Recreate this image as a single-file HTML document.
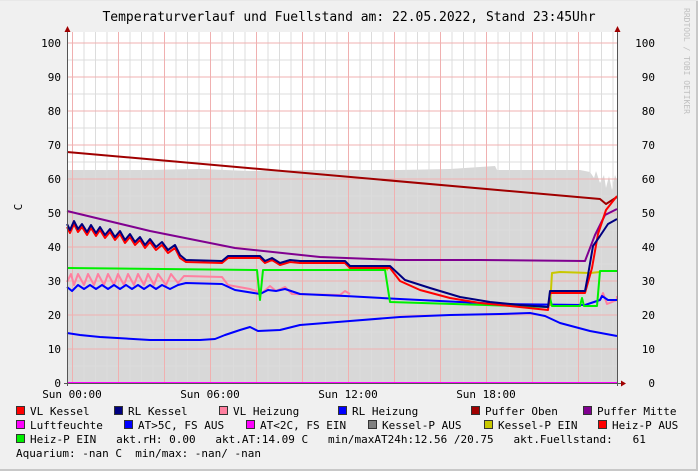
<!DOCTYPE html>
<html><head><meta charset="utf-8"><style>
html,body{margin:0;padding:0;background:#f0f0f0;}
svg{display:block;font-family:"DejaVu Sans Mono","Liberation Mono",monospace;}
</style></head><body>
<svg width="698" height="471" viewBox="0 0 698 471" xmlns="http://www.w3.org/2000/svg">
<rect x="0" y="0" width="698" height="471" fill="#f0f0f0"/>
<rect x="696" y="0" width="2" height="471" fill="#c8c8c8"/>
<rect x="0" y="469" width="698" height="2" fill="#c8c8c8"/>
<rect x="0" y="0" width="698" height="1" fill="#e8e8e8"/>
<rect x="67" y="32" width="550" height="351" fill="#ffffff"/>
<path d="M67,383 L67,170 L150,170 L200,169 L250,171 L300,170 L350,170 L400,170 L450,169 L495,166 L497,170 L540,170 L580,170 L590,172 L594,178 L596,171 L600,183 L604,175 L606,188 L609,176 L612,190 L615,175 L617,180 L617,383 Z" fill="#d8d8d8"/>
<g stroke-width="1">
<g stroke="#dcdcdc">
<path d="M84,32V383M95.5,32V383M107,32V383M130,32V383M141.5,32V383M153,32V383M176,32V383M187.5,32V383M199,32V383M222,32V383M233.5,32V383M245,32V383M268,32V383M279.5,32V383M291,32V383M314,32V383M325.5,32V383M337,32V383M360,32V383M371.5,32V383M383,32V383M406,32V383M417.5,32V383M429,32V383M452,32V383M463.5,32V383M475,32V383M498,32V383M509.5,32V383M521,32V383M544,32V383M555.5,32V383M567,32V383M590,32V383M601.5,32V383M613,32V383"/>
<path d="M67,366H617M67,332H617M67,298H617M67,264H617M67,230H617M67,196H617M67,162H617M67,128H617M67,94H617M67,60H617"/>
</g>
<g stroke="#f0b0b0">
<path d="M72.5,32V383M118.5,32V383M164.5,32V383M210.5,32V383M256.5,32V383M302.5,32V383M348.5,32V383M394.5,32V383M440.5,32V383M486.5,32V383M532.5,32V383M578.5,32V383"/>
<path d="M67,349H617M67,315H617M67,281H617M67,247H617M67,213H617M67,179H617M67,145H617M67,111H617M67,77H617M67,43H617"/>
</g>
</g>
<g fill="none" stroke-width="2" stroke-linejoin="round">
<path d="M67,152 L600,199 L606,204 L617,197" stroke="#a00000"/>
<path d="M67,211 L150,231 L235,248 L320,257 L400,260 L480,260 L585,261 L595,235 L605,215 L617,209" stroke="#800090"/>
<path d="M67,333 L80,335 L100,337 L150,340 L200,340 L215,339 L225,335 L240,330 L250,327 L258,331 L280,330 L300,325 L350,321 L400,317 L450,315 L500,314 L530,313 L545,316 L560,323 L590,331 L617,336" stroke="#0000ff"/>
<path d="M67,282 L71,274 L74,285 L78,274 L84,285 L88,274 L94,285 L98,274 L104,285 L108,274 L114,285 L118,274 L124,285 L128,274 L134,285 L138,274 L144,285 L148,274 L154,285 L158,274 L166,285 L171,274 L178,283 L184,276 L222,277 L228,285 L250,289 L262,293 L270,286 L276,291 L285,287 L292,294 L340,295 L345,291 L350,294" stroke="#ff80a0"/>
<path d="M600,300 L603,293 L607,304 L617,300 L617,296" stroke="#ff80a0"/>
<path d="M67,287 L72,291 L78,285 L84,289 L90,285 L96,289 L102,285 L108,289 L114,285 L120,289 L126,285 L132,289 L138,285 L144,289 L150,285 L156,289 L162,285 L170,289 L178,285 L186,283 L222,284 L235,290 L260,294 L268,290 L276,291 L285,289 L300,294 L345,296 L400,299 L500,304 L585,305 L600,300 L602,296 L608,300 L617,300" stroke="#0000ff"/>
<path d="M340,270 L385,268 L388,270" stroke="#c8c800"/>
<path d="M550,306 L552,273 L560,272 L590,273 L600,272" stroke="#c8c800"/>
<path d="M67,268 L257,270 L260,300 L263,270 L340,270 L385,270 L390,302 L548,307 L550,298 L552,306 L580,306 L582,298 L584,306 L597,306 L600,271 L617,271" stroke="#00f000"/>
<path d="M67,227 L70,233 L74,224 L78,232 L82,227 L87,235 L91,228 L96,236 L100,230 L105,238 L110,232 L115,240 L120,234 L125,243 L130,237 L135,245 L140,240 L145,248 L150,242 L156,250 L162,245 L168,253 L175,248 L180,258 L186,262 L222,263 L228,258 L260,258 L265,263 L272,260 L280,265 L290,262 L300,263 L345,263 L350,268 L390,268 L400,281 L420,290 L450,298 L480,303 L510,306 L548,310 L550,293 L585,293 L592,268 L598,234 L606,210 L617,196" stroke="#ff0000"/>
<path d="M67,224 L70,230 L74,221 L78,229 L82,224 L87,232 L91,225 L96,233 L100,227 L105,235 L110,229 L115,237 L120,231 L125,240 L130,234 L135,242 L140,237 L145,245 L150,239 L156,247 L162,242 L168,250 L175,245 L180,255 L186,260 L222,261 L228,256 L260,256 L265,261 L272,258 L280,263 L290,260 L300,261 L345,261 L350,266 L390,266 L405,280 L430,288 L460,297 L490,302 L520,305 L548,307 L550,291 L585,291 L588,275 L593,246 L600,236 L608,224 L617,219" stroke="#000080"/>
</g>
<line x1="67" y1="383" x2="617" y2="383" stroke="#ff00ff" stroke-width="2"/>
<line x1="67.5" y1="30" x2="67.5" y2="386" stroke="#555" stroke-width="1"/>
<line x1="617.5" y1="30" x2="617.5" y2="386" stroke="#555" stroke-width="1"/>
<line x1="64" y1="383.5" x2="621" y2="383.5" stroke="#555" stroke-width="1"/>
<path d="M64.5,32 L67.5,26 L70.5,32 Z" fill="#a00000"/>
<path d="M614.5,32 L617.5,26 L620.5,32 Z" fill="#a00000"/>
<path d="M621,380.5 L626,383.5 L621,386.5 Z" fill="#a00000"/>
<g font-size="11" fill="#000">
<text x="349" y="21" font-size="13" text-anchor="middle">Temperaturverlauf und Fuellstand am: 22.05.2022, Stand 23:45Uhr</text>
<g text-anchor="end">
<text x="61" y="47">100</text><text x="61" y="81">90</text><text x="61" y="115">80</text><text x="61" y="149">70</text><text x="61" y="183">60</text><text x="61" y="217">50</text><text x="61" y="251">40</text><text x="61" y="285">30</text><text x="61" y="319">20</text><text x="61" y="353">10</text><text x="61" y="387">0</text>
<text x="655" y="47">100</text><text x="655" y="81">90</text><text x="655" y="115">80</text><text x="655" y="149">70</text><text x="655" y="183">60</text><text x="655" y="217">50</text><text x="655" y="251">40</text><text x="655" y="285">30</text><text x="655" y="319">20</text><text x="655" y="353">10</text><text x="655" y="387">0</text>
</g>
<text x="18" y="211" transform="rotate(-90 18 207)" text-anchor="middle">C</text>
<g text-anchor="middle">
<text x="72" y="398">Sun 00:00</text><text x="210" y="398">Sun 06:00</text><text x="348" y="398">Sun 12:00</text><text x="486" y="398">Sun 18:00</text>
</g>
<text x="684" y="8" font-size="8" fill="#c0c0c0" transform="rotate(90 684 8)">RRDTOOL / TOBI OETIKER</text>
<g>
<rect x="16.5" y="406.5" width="8" height="8" fill="#ff0000" stroke="#333"/><text x="30" y="415">VL Kessel</text>
<rect x="114.5" y="406.5" width="8" height="8" fill="#000080" stroke="#333"/><text x="128" y="415">RL Kessel</text>
<rect x="219.5" y="406.5" width="8" height="8" fill="#ff80a0" stroke="#333"/><text x="233" y="415">VL Heizung</text>
<rect x="338.5" y="406.5" width="8" height="8" fill="#0000ff" stroke="#333"/><text x="352" y="415">RL Heizung</text>
<rect x="471.5" y="406.5" width="8" height="8" fill="#a00000" stroke="#333"/><text x="485" y="415">Puffer Oben</text>
<rect x="583.5" y="406.5" width="8" height="8" fill="#800090" stroke="#333"/><text x="597" y="415">Puffer Mitte</text>
<rect x="16.5" y="420.5" width="8" height="8" fill="#ff00ff" stroke="#333"/><text x="30" y="429">Luftfeuchte</text>
<rect x="124.5" y="420.5" width="8" height="8" fill="#0000ff" stroke="#333"/><text x="138" y="429">AT&gt;5C, FS AUS</text>
<rect x="246.5" y="420.5" width="8" height="8" fill="#ff00ff" stroke="#333"/><text x="260" y="429">AT&lt;2C, FS EIN</text>
<rect x="368.5" y="420.5" width="8" height="8" fill="#808080" stroke="#333"/><text x="382" y="429">Kessel-P AUS</text>
<rect x="484.5" y="420.5" width="8" height="8" fill="#c8c800" stroke="#333"/><text x="498" y="429">Kessel-P EIN</text>
<rect x="598.5" y="420.5" width="8" height="8" fill="#ff0000" stroke="#333"/><text x="612" y="429">Heiz-P AUS</text>
<rect x="16.5" y="434.5" width="8" height="8" fill="#00f000" stroke="#333"/><text x="30" y="443" xml:space="preserve">Heiz-P EIN   akt.rH: 0.00   akt.AT:14.09 C   min/maxAT24h:12.56 /20.75   akt.Fuellstand:   61</text>
<text x="16" y="457" xml:space="preserve">Aquarium: -nan C  min/max: -nan/ -nan</text>
</g>
</g>
</svg>
</body></html>
